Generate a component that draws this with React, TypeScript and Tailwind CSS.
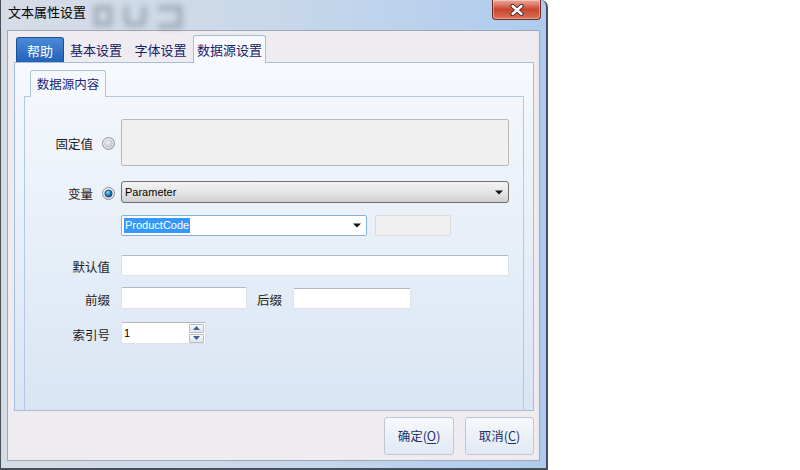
import React from "react";

const Radio = ({ checked, id }: { checked?: boolean; id: string }) => (
  <svg width="13" height="13" viewBox="0 0 13 13" className="shrink-0">
    <defs>
      <radialGradient id={`${id}o`} cx="40%" cy="35%" r="70%">
        <stop offset="0%" stopColor="#ffffff" />
        <stop offset="100%" stopColor="#d4d8dd" />
      </radialGradient>
      <radialGradient id={`${id}i`} cx="40%" cy="35%" r="70%">
        <stop offset="0%" stopColor="#8fd8ff" />
        <stop offset="55%" stopColor="#1f7fc8" />
        <stop offset="100%" stopColor="#0b3f73" />
      </radialGradient>
      <radialGradient id={`${id}g`} cx="40%" cy="35%" r="70%">
        <stop offset="0%" stopColor="#f2f2f2" />
        <stop offset="100%" stopColor="#c4c4c4" />
      </radialGradient>
    </defs>
    <circle cx="6.5" cy="6.5" r="6" fill={`url(#${id}o)`} stroke="#8b939c" strokeWidth="1" />
    {checked ? (
      <circle cx="6.5" cy="6.5" r="3.6" fill={`url(#${id}i)`} stroke="#1a3e66" strokeWidth="0.8" />
    ) : (
      <circle cx="6.5" cy="6.5" r="3.8" fill={`url(#${id}g)`} stroke="#b8bcc2" strokeWidth="0.6" />
    )}
  </svg>
);

const Arrow = () => (
  <svg width="8" height="5" viewBox="0 0 8 5" className="shrink-0">
    <polygon points="0,0.5 8,0.5 4,4.5" fill="#111" />
  </svg>
);

const TextBox = ({ className = "", children }: { className?: string; children?: React.ReactNode }) => (
  <div
    className={`bg-white border border-[#dde2e8] border-t-[#b4b8bf] rounded-[2px] ${className}`}
  >
    {children}
  </div>
);

const Label = ({ w, children }: { w: string; children: React.ReactNode }) => (
  <div className={`${w} pt-[4px] text-right text-[12.5px] leading-none text-[#1c1c1c] shrink-0`}>{children}</div>
);

export default function App() {
  return (
    <div className="w-[800px] h-[470px] bg-white flex font-['Noto_Sans_CJK_SC','Liberation_Sans',sans-serif]">
      <div className="w-[548px] h-[470px] flex flex-col border-l border-b-2 border-r-2 border-[#4a505a] rounded-tr-[7px] bg-linear-to-r from-[#d6dce5] via-[#c8d8ea] to-[#aecbee] overflow-hidden">
        {/* Title bar */}
        <div className="h-[30px] flex items-start justify-between shrink-0">
          <div className="flex items-start">
            <span className="pl-[7px] pt-[3px] text-[13px] leading-[18px] text-black">文本属性设置</span>
            <div className="ml-[8px] mt-[6px] flex items-start gap-[12px] opacity-45 blur-[3px]">
              <div className="w-[18px] h-[20px] border-[4px] border-[#4e5664]" />
              <div className="w-[22px] h-[20px] border-[4px] border-t-0 border-[#4e5664] rounded-b-[6px]" />
              <div className="w-[24px] h-[22px] border-[4px] border-l-0 border-[#4e5664]" />
            </div>
          </div>
          <div className="mr-[5px] w-[49px] h-[20px] rounded-b-[4px] border border-t-0 border-[#6e2b22] bg-linear-to-b from-[#e9a99b] via-[#c8452f] to-[#d87458] flex items-center justify-center shadow-[inset_0_0_0_1px_rgba(255,255,255,0.35)]">
            <svg width="16" height="12" viewBox="0 0 16 12">
              <path d="M3.5 2 L12.5 10 M12.5 2 L3.5 10" stroke="#3b2424" strokeWidth="4.2" strokeLinecap="round" />
              <path d="M3.5 2 L12.5 10 M12.5 2 L3.5 10" stroke="#ffffff" strokeWidth="2.4" strokeLinecap="round" />
            </svg>
          </div>
        </div>

        {/* Client area */}
        <div className="ml-[6px] w-[533px] h-[431px] border border-[#9fa8b4] bg-[#eeecf0] flex flex-col shrink-0">
          {/* Tab strip */}
          <div className="h-[31px] pt-[4px] pl-[8px] flex items-end shrink-0">
            <div className="w-[48px] h-[25px] rounded-t-[3px] border border-b-0 border-[#1d4f96] bg-linear-to-b from-[#4a8ad8] to-[#2461b8] text-white text-[13px] leading-none flex items-center justify-center">
              帮助
            </div>
            <div className="w-[64px] h-[25px] text-[13px] leading-none text-[#18206a] flex items-center justify-center">
              基本设置
            </div>
            <div className="w-[65px] h-[25px] text-[13px] leading-none text-[#18206a] flex items-center justify-center">
              字体设置
            </div>
            <div className="relative z-10 -mb-px w-[73px] h-[28px] rounded-t-[3px] border border-b-0 border-[#a6bcd8] bg-[#f6f9fd] text-[13px] leading-none text-[#18206a] flex items-center justify-center">
              数据源设置
            </div>
          </div>

          {/* Outer panel */}
          <div className="ml-[6px] w-[520px] h-[349px] border border-[#a6bcd8] bg-linear-to-b from-[#f6f9fd] to-[#d9e5f3] flex flex-col px-[9px] pt-[7px] shrink-0">
            <div className="flex shrink-0">
              <div className="relative z-10 -mb-px ml-[6px] w-[76px] h-[27px] rounded-t-[3px] border border-b-0 border-[#aec4df] bg-[#f5f8fd] text-[12.5px] leading-none text-[#1e247a] flex items-center justify-center">
                数据源内容
              </div>
            </div>

            {/* Inner panel */}
            <div className="flex-1 border-t border-l border-r border-[#b3c9e3] flex flex-col">
              {/* 固定值 */}
              <div className="mt-[22px] flex items-center">
                <Label w="w-[68px]">固定值</Label>
                <div className="ml-[9px] pt-[2px]">
                  <Radio id="r1" />
                </div>
                <div className="ml-[6px] w-[388px] h-[47px] bg-[#f0f0f0] border border-[#b9b9b9] rounded-[2px]" />
              </div>

              {/* 变量 */}
              <div className="mt-[15px] flex items-center">
                <Label w="w-[68px]">变量</Label>
                <div className="ml-[9px] pt-[2px]">
                  <Radio id="r2" checked />
                </div>
                <div className="ml-[6px] w-[388px] h-[22px] rounded-[3px] border border-[#707070] bg-linear-to-b from-[#f3f3f3] via-[#e6e6e6] to-[#cfcfcf] flex items-center justify-between pl-[3px] pr-[5px]">
                  <span className="font-['Liberation_Sans',sans-serif] text-[11px] leading-none text-black">Parameter</span>
                  <Arrow />
                </div>
              </div>

              {/* ProductCode */}
              <div className="mt-[12px] pl-[96px] flex items-center">
                <div className="w-[246px] h-[21px] rounded-[2px] border border-[#86b0dc] bg-white flex items-center justify-between pl-[2px] pr-[5px]">
                  <span className="font-['Liberation_Sans',sans-serif] text-[11px] leading-[15px] h-[15px] px-[1px] bg-[#3399ff] text-white">
                    ProductCode
                  </span>
                  <Arrow />
                </div>
                <div className="ml-[8px] w-[76px] h-[21px] bg-[#f0f0f0] border border-[#dcdcdc] rounded-[2px]" />
              </div>

              {/* 默认值 */}
              <div className="mt-[19px] flex items-center">
                <Label w="w-[85px]">默认值</Label>
                <TextBox className="ml-[11px] w-[388px] h-[21px]" />
              </div>

              {/* 前缀 / 后缀 */}
              <div className="mt-[11px] flex items-center">
                <Label w="w-[85px]">前缀</Label>
                <TextBox className="ml-[11px] w-[126px] h-[22px]" />
                <div className="ml-[10px] w-[28px] pt-[4px] text-[12.5px] leading-none text-[#1c1c1c]">后缀</div>
                <TextBox className="ml-[8px] w-[118px] h-[21px]" />
              </div>

              {/* 索引号 */}
              <div className="mt-[13px] flex items-center">
                <Label w="w-[85px]">索引号</Label>
                <TextBox className="ml-[11px] w-[85px] h-[22px] flex items-center justify-between pl-[2px] pr-[1px]">
                  <span className="font-['Liberation_Sans',sans-serif] text-[11px] leading-none text-black">1</span>
                  <div className="flex flex-col gap-px">
                    <div className="w-[15px] h-[9px] border border-[#b4bcc8] rounded-[1px] bg-linear-to-b from-[#f7f9fc] to-[#dfe5ee] flex items-center justify-center">
                      <svg width="7" height="4" viewBox="0 0 7 4">
                        <polygon points="3.5,0 7,4 0,4" fill="#3f5f8f" />
                      </svg>
                    </div>
                    <div className="w-[15px] h-[9px] border border-[#b4bcc8] rounded-[1px] bg-linear-to-b from-[#f7f9fc] to-[#dfe5ee] flex items-center justify-center">
                      <svg width="7" height="4" viewBox="0 0 7 4">
                        <polygon points="0,0 7,0 3.5,4" fill="#3f5f8f" />
                      </svg>
                    </div>
                  </div>
                </TextBox>
              </div>
            </div>
          </div>

          {/* Buttons */}
          <div className="mt-[6px] pr-[5px] flex justify-end gap-[11px]">
            <div className="w-[70px] h-[38px] rounded-[3px] border border-[#c3c7cd] bg-linear-to-b from-[#f6f8fc] to-[#e2e9f3] flex items-center justify-center text-[12.5px] leading-none text-[#23306a]">
              确定(<span className="underline underline-offset-2">O</span>)
            </div>
            <div className="w-[69px] h-[38px] rounded-[3px] border border-[#c3c7cd] bg-linear-to-b from-[#f6f8fc] to-[#e2e9f3] flex items-center justify-center text-[12.5px] leading-none text-[#23306a]">
              取消(<span className="underline underline-offset-2">C</span>)
            </div>
          </div>
        </div>
      </div>
    </div>
  );
}
